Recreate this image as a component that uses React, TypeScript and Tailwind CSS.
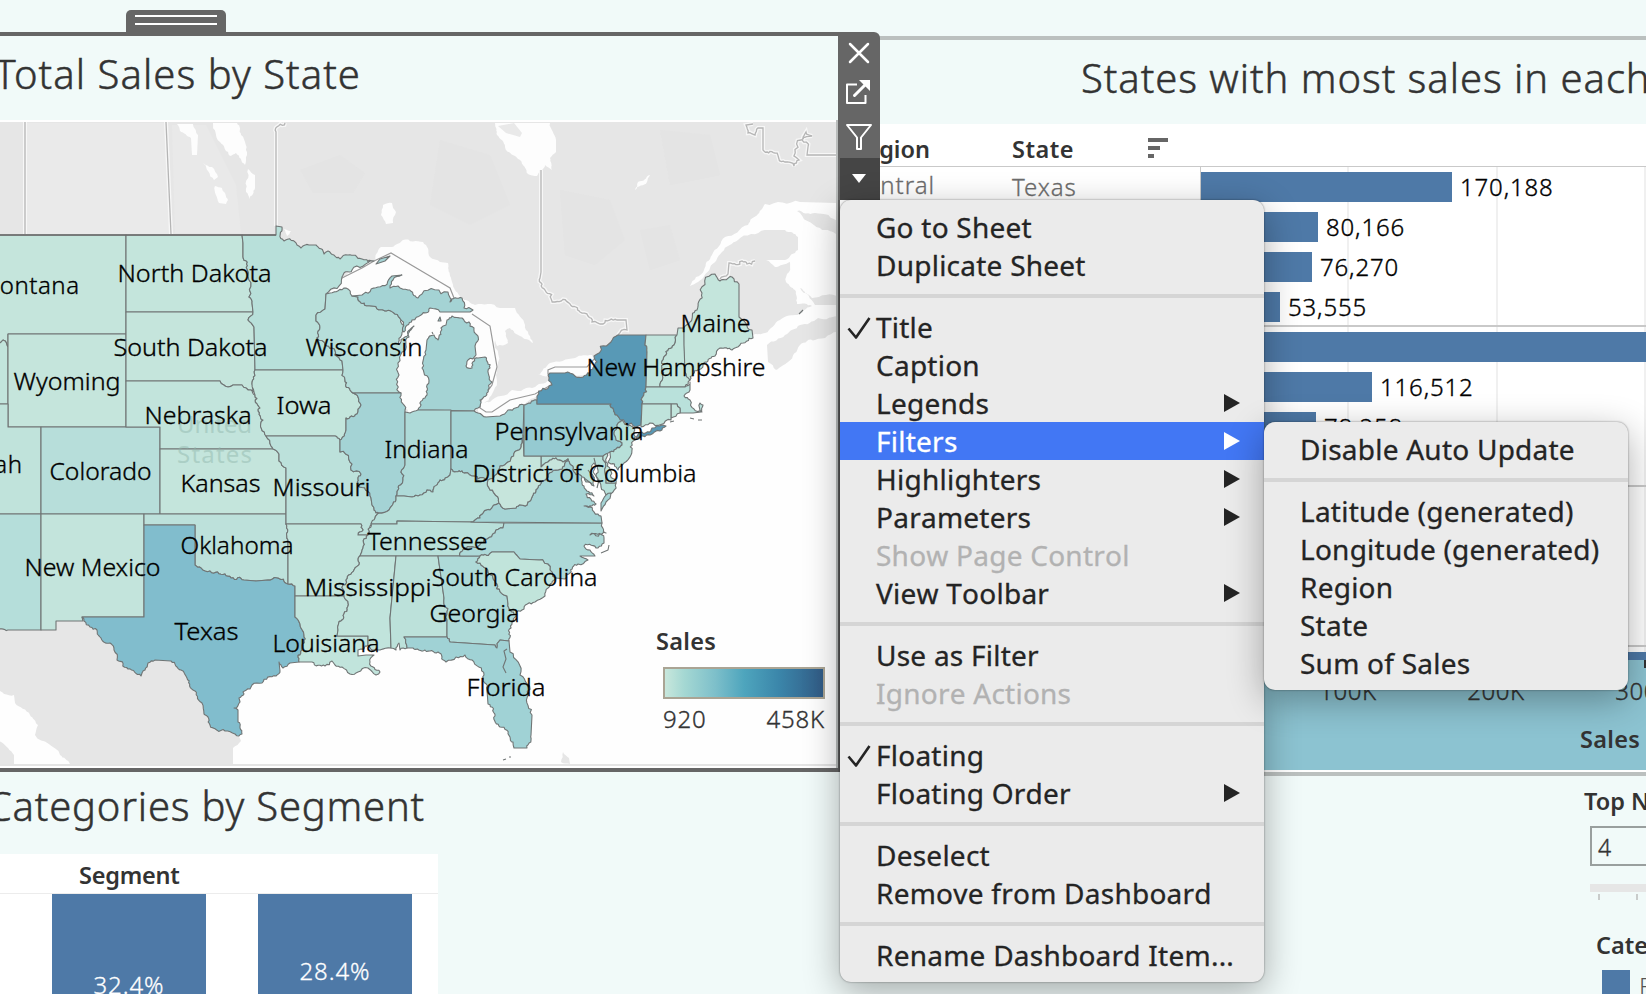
import React from "react";
import clsx from "clsx";

type Pt = [number, number];

const parse = (s: string): Pt[] =>
  s.trim().split(/\s+/).map((p) => p.split(",").map(Number) as Pt);

const hash = (a: number, b: number) => {
  const v = Math.sin(a * 12.9898 + b * 78.233) * 43758.5453;
  return v - Math.floor(v) - 0.5;
};

// Splits a border segment into a slightly ragged line; the result does not
// depend on the direction, so neighbouring states share the same edge.
const ragged = (a: Pt, b: Pt, depth: number, amp: number): Pt[] => {
  const dx = b[0] - a[0];
  const dy = b[1] - a[1];
  const len = Math.hypot(dx, dy);
  if (depth === 0 || len < 3) return [b];
  const flip = a[0] > b[0] || (a[0] === b[0] && a[1] > b[1]);
  const o = hash(a[0] + b[0], a[1] + b[1]) * len * amp * (flip ? -1 : 1);
  const m: Pt = [(a[0] + b[0]) / 2 - (dy / len) * o, (a[1] + b[1]) / 2 + (dx / len) * o];
  return [...ragged(a, m, depth - 1, amp * 1.25), ...ragged(m, b, depth - 1, amp * 1.25)];
};

const outline = (s: string, amp = 0.4, close = true) => {
  const pts = parse(s);
  const out: Pt[] = [pts[0]];
  const n = close ? pts.length : pts.length - 1;
  for (let i = 0; i < n; i++) {
    const a = pts[i];
    const b = pts[(i + 1) % pts.length];
    const dx = Math.abs(b[0] - a[0]);
    const dy = Math.abs(b[1] - a[1]);
    const straight = dx <= 1 || dy <= 1 || (dx > 35 && dy <= 5) || (dy > 35 && dx <= 7);
    if (straight) out.push(b);
    else out.push(...ragged(a, b, 3, amp));
  }
  return "M" + out.map((p) => p[0].toFixed(1) + "," + p[1].toFixed(1)).join("L") + (close ? "Z" : "");
};

const STATES: [string, string][] = [
  ["#c5e5dc", "-20,235 126,235 126,334 8,334 8,347 3,340 -2,344 -20,344"],
  ["#c2e4dc", "-20,344 -2,344 3,340 8,347 8,404 -20,404"],
  ["#c5e5dc", "8,334 126,334 126,427 8,427"],
  ["#c0e3db", "-4,404 8,404 8,427 41,427 41,514 -4,514"],
  ["#b7deda", "41,427 160,427 160,514 41,514"],
  ["#b5deda", "-4,514 41,514 41,630 8,630 -4,625"],
  ["#c3e4dc", "41,514 144,514 144,617 82,617 83,621 56,621 56,630 41,630"],
  ["#c4e5dc", "126,235 242,235 243,243 243,257 247,269 249,297 252,303 253,312 126,312"],
  ["#c5e5dc", "126,312 253,312 248,320 254,327 255,370 252,384 254,392 251,390 242,385 233,385 228,387 220,381 126,381"],
  ["#c2e4dc", "126,381 220,381 228,387 233,385 242,385 251,390 255,395 260,408 263,420 266,436 271,446 273,449 160,449 160,427 126,427"],
  ["#c4e5dc", "160,449 273,449 279,454 279,461 286,468 286,514 160,514"],
  ["#bde1db", "144,514 286,514 286,524 288,540 288,584 277,578 268,580 256,581 244,580 231,578 225,574 210,571 201,568 195,565 195,525 144,525"],
  ["#81bdcd", "144,525 195,525 195,565 201,568 210,571 225,574 231,578 244,580 256,581 268,580 277,578 288,584 295,586 295,617 300,624 304,635 302,650 299,662 290,663 283,668 279,662 280,671 276,676 262,683 252,685 250,689 243,692 244,694 239,698 240,702 234,708 238,710 238,722 240,728 242,734 239,736 235,734 225,731 210,725 204,714 202,703 193,690 187,678 181,670 171,661 155,660 148,663 145,670 141,676 128,669 117,660 114,650 110,643 100,637 90,627 84,621 82,617 144,617"],
  ["#b8e0da", "242,235 276,235 276,226 282,227 284,241 297,245 301,248 309,245 316,245 324,254 328,251 340,259 348,255 362,259 374,261 352,270 342,277 326,294 325,309 316,315 316,321 319,324 317,338 325,345 335,355 342,361 343,370 255,370 254,327 248,320 253,312 252,303 249,297 247,269 243,257 243,243"],
  ["#c3e5dc", "255,370 343,370 345,380 350,390 353,393 358,397 361,405 357,414 346,418 346,430 340,440 335,436 266,436 263,420 260,408 255,395 252,384"],
  ["#bce1db", "266,436 335,436 340,440 340,452 351,470 361,474 358,485 371,498 372,505 379,513 375,518 370,526 368,535 358,535 363,530 361,524 286,524 286,468 279,461 279,454 273,449 271,446"],
  ["#c1e4dc", "286,524 361,524 363,530 358,535 368,535 363,548 360,556 355,568 346,580 344,596 295,596 295,586 288,584 288,540"],
  ["#c1e4dc", "295,596 344,596 347,608 342,620 338,630 337,636 368,636 368,645 358,650 358,656 366,655 374,655 370,662 380,672 376,675 368,668 358,672 350,674 342,667 335,665 332,661 325,666 312,662 299,662 302,650 304,635 300,624 295,617"],
  ["#b6deda", "326,294 330,293 346,288 352,296 358,297 361,303 372,306 386,311 395,314 401,320 403,331 399,344 408,335 414,326 409,337 402,352 399,375 401,393 353,393 350,390 345,380 343,370 342,361 335,355 325,345 317,338 319,324 316,321 316,315 325,309"],
  ["#a4d3d5", "353,393 401,393 405,410 405,465 403,480 398,490 396,496 396,500 389,510 379,513 372,505 371,498 358,485 361,474 351,470 340,452 340,440 346,430 346,418 357,414 361,405 358,397"],
  ["#a4d3d4", "352,296 362,295 378,287 392,276 402,275 393,280 390,288 398,286 408,290 418,298 422,294 448,292 450,302 462,298 464,308 473,310 470,312 452,312 440,312 430,308 421,315 412,320 404,332 401,320 395,314 386,311 372,306 361,303 358,297"],
  ["#a4d3d4", "447,320 452,316 462,318 474,328 477,335 475,346 476,355 468,360 466,366 472,368 478,358 485,357 490,368 492,382 488,390 480,400 478,408 474,411 418,410 425,398 427,385 422,368 426,350 427,340 434,335 438,340 441,328 446,325"],
  ["#aedad8", "405,412 410,413 418,410 451,410 451,469 450,475 440,480 433,492 427,490 420,495 412,497 404,496 396,496 398,490 403,480 405,465"],
  ["#a4d4d5", "451,411 474,411 478,413 486,417 500,416 508,410 524,405 523,435 519,450 508,462 500,466 497,474 488,480 484,478 472,476 462,471 451,469"],
  ["#b6dfd9", "379,513 389,510 396,500 396,496 404,496 412,497 420,495 427,490 433,492 440,480 450,475 451,469 462,471 472,476 484,478 488,480 490,490 499,503 490,510 480,518 471,522 397,521 397,524 371,524 375,518"],
  ["#b9e0da", "371,524 397,524 397,521 471,522 504,523 503,528 495,533 484,540 470,547 460,556 360,556 363,548 368,535"],
  ["#c1e4dc", "360,556 396,556 390,618 391,648 380,650 372,650 368,645 368,636 337,636 338,630 342,620 347,608 344,596 346,580 355,568"],
  ["#bce1da", "396,556 438,556 444,598 447,620 447,637 404,637 407,648 400,650 399,643 396,650 391,648 390,618"],
  ["#aedad8", "438,556 460,556 480,556 476,562 488,572 497,584 507,596 508,604 516,614 511,628 509,641 500,640 497,648 495,645 450,642 447,637 447,620 444,598"],
  ["#a0d2d5", "404,637 447,637 450,642 495,645 497,648 500,640 509,641 510,652 520,675 528,695 532,715 531,735 527,748 514,748 510,737 500,727 495,716 488,704 487,690 484,675 472,660 465,655 456,657 446,662 438,652 425,650 413,648 407,648"],
  ["#add9d8", "504,523 602,523 606,533 590,535 604,538 604,543 598,548 584,546 590,550 595,556 580,556 588,560 578,564 570,573 565,579 556,578 539,560 520,559 514,552 492,552 480,556 460,556 470,547 484,540 495,533 503,528"],
  ["#c1e4db", "480,556 492,552 514,552 520,559 539,560 556,578 548,588 545,596 535,602 522,610 516,614 508,604 507,596 497,584 488,572 476,562"],
  ["#b7e0da", "541,456 603,456 606,483 616,483 613,492 606,495 601,487 597,478 594,463 591,470 594,486 586,482 580,475 571,465 568,459 563,462 556,458 550,460 541,467"],
  ["#a5d4d5", "568,459 571,465 580,475 584,486 594,496 586,494 596,504 584,506 598,514 601,516 602,523 471,522 480,518 490,510 499,503 505,509 516,508 527,505 533,495 540,485 545,480 558,470"],
  ["#c6e5dc", "524,456 541,456 541,467 550,460 556,458 563,462 568,459 558,470 545,480 540,485 533,495 527,505 516,508 505,509 499,503 490,490 488,480 497,474 500,466 508,462 519,450 523,435"],
  ["#c1e4dc", "603,456 607,453 610,470 616,483 606,483"],
  ["#a5d4d5", "606,495 611,493 606,502 601,511 601,503"],
  ["#95cad1", "524,405 537,400 537,404 611,404 617,415 622,420 617,425 614,433 622,445 610,452 603,456 524,456"],
  ["#b7e0d9", "622,420 633,427 635,440 631,455 624,463 618,470 608,462 610,452 622,445 614,433 617,425"],
  ["#5899b6", "537,404 537,396 552,385 548,375 550,373 565,373 575,376 590,373 597,362 594,356 611,342 618,335 646,335 645,345 647,352 646,387 642,404 641,425 636,427 617,415 611,404"],
  ["#5899b6", "642,432 652,428 662,425 666,426 660,431 650,435 636,438"],
  ["#c1e4dc", "646,335 677,335 674,345 666,355 662,368 660,387 646,387 647,352 645,345"],
  ["#c2e5dc", "677,335 678,328 684,328 685,372 690,380 685,387 660,387 662,368 666,355 674,345"],
  ["#c4e5dc", "684,328 690,322 697,310 702,293 715,274 720,281 732,277 739,284 739,317 752,330 753,338 740,345 732,350 720,348 715,356 705,362 698,370 690,380 685,372 684,345"],
  ["#b9e1db", "646,387 685,387 690,382 690,390 684,396 690,400 694,409 702,412 700,403 703,405 701,412 693,413 680,413 677,404 642,404"],
  ["#c2e5dc", "671,404 677,404 680,413 671,418"],
  ["#bfe3db", "642,404 671,404 671,420 650,423 641,427"],
];

const LABELS: [string, number, number, number][] = [
  ["North Dakota", 119, 270, 282],
  ["South Dakota", 115, 266, 356],
  ["Wisconsin", 307, 421, 356],
  ["Wyoming", 15, 119, 390],
  ["Nebraska", 146, 250, 424],
  ["Iowa", 278, 330, 414],
  ["Colorado", 51, 150, 480],
  ["Kansas", 182, 259, 492],
  ["Missouri", 274, 369, 496],
  ["Indiana", 386, 467, 458],
  ["Oklahoma", 182, 292, 554],
  ["New Mexico", 26, 159, 576],
  ["Texas", 176, 237, 640],
  ["Louisiana", 274, 378, 652],
  ["Mississippi", 306, 430, 596],
  ["Tennessee", 369, 486, 550],
  ["South Carolina", 433, 596, 586],
  ["Georgia", 431, 518, 622],
  ["Florida", 468, 544, 696],
  ["Pennsylvania", 496, 642, 440],
  ["District of Columbia", 474, 695, 482],
  ["New Hampshire", 588, 764, 376],
  ["Maine", 682, 749, 332],
];

const LAND = [
  "-5,122 840,122 840,203 800,202 765,204 758,214 748,225 725,237 712,255 704,270 690,286 698,282 710,268 722,252 738,240 765,230 785,230 798,237 798,250 785,260 766,260 775,267 790,262 786,282 795,290 797,304 812,306 795,315 780,320 765,333 753,335 700,368 640,415 560,450 300,450 100,600 -5,630",
  "-5,627 56,628 56,615 84,615 150,640 205,665 225,715 238,730 241,741 233,748 233,764 70,764 60,755 35,735 38,725 30,715 15,703 14,695 -5,690",
  "-5,735 8,748 14,755 14,764 -5,764",
  "767,345 785,335 800,325 818,318 840,316 840,330 815,340 800,345 788,362 776,370 768,362",
  "797,211 815,213 840,222 840,236 820,228",
  "800,288 812,298 840,296 840,305 815,305",
  "563,752 569,758 570,764 561,762",
];

const WATER = [
  "326,294 342,277 374,261 381,247 392,247 403,240 423,242 430,257 440,262 448,263 450,276 455,290 464,300 475,305 500,308 515,308 525,325 533,343 520,336 510,328 505,331 508,343 497,346 495,340 497,370 494,390 480,408 440,412 410,414 396,400 396,335 340,300",
  "478,404 490,402 512,390 535,387 552,380 545,392 524,405 500,416 486,417 478,411",
  "538,375 550,363 575,358 592,355 597,362 590,375 550,377",
  "495,123 550,123 556,140 556,152 550,158 552,170 545,165 537,176 528,174 520,160 505,147 497,135",
  "213,123 237,123 241,135 247,155 245,165 236,153 230,156 220,142",
  "177,124 193,124 198,135 197,155 192,155 191,138 180,131",
  "203,163 212,167 218,177 214,180",
  "248,169 255,175 255,188 249,199 246,192",
  "215,186 222,188 228,200 226,204 219,203",
  "383,205 392,203 396,212 393,223 386,224 381,215",
  "635,190 638,182 650,175 647,182",
  "284,229 291,231 287,236",
];

const BOUNDS = [
  "276,226 276,132 285,123",
  "541,170 541,272 540,278 545,290 555,302 570,304 580,312 588,316 592,322 603,324 617,320 626,320 627,330 618,335",
  "753,124 746,125 748,133 755,135 758,128 763,128 763,150 775,153 785,162 794,166 799,160 801,140 806,132 812,136 802,140 808,147 807,155 836,155",
  "720,279 728,274 729,263 742,261 747,264 755,261",
];

const LAKE_LINES = [
  "374,261 391,253 440,282",
  "440,282 450,288 454,298",
  "472,314 490,326 497,367 492,385 480,402 480,408 486,412 492,412 510,400 535,394 551,385",
  "548,374 548,370 555,367 587,367 596,357",
  "325,294 342,278 362,268 374,261",
];

function UsMap() {
  return (
    <svg className="block h-[642px] w-[836px]" viewBox="0 122 836 642">
      <rect x="0" y="122" width="836" height="642" fill="#fefefe" />
      <g fill="#e6e6e6">
        {LAND.map((d) => (
          <path key={d} d={outline(d, 0.22)} />
        ))}
      </g>
      <path d="M26 123h140l5 112H26z" fill="#eaeaea" />
      <path d="M172 125h34l30 60 5 48h-66z" fill="#e9e9e9" />
      <path d="M300 170l40-15 25 18-12 20-40 0zM440 140l50 15 20 50-40 20-40-20zM560 190l50 10 15 40-30 25-30-10zM660 130l50 5 10 40-50 10zM640 230l30-5 10 35-30 10z" fill="#e3e3e3" opacity="0.6" />
      <g fill="#fdfdfd">
        {WATER.map((d) => (
          <path key={d} d={outline(d, 0.22)} />
        ))}
      </g>
      <path d="M498 126l16-3 8 10-2 4-14-4z" fill="#e9e9e9" />
      <g fill="none" stroke="#f7f7f7" strokeWidth="4">
        <path d="M25 122v112M166 122l5 112" />
        {BOUNDS.map((d) => (
          <path key={d} d={outline(d, 0.5, false)} />
        ))}
      </g>
      <g fill="none" stroke="#b5b5b5" strokeWidth="1.3">
        <path d="M25 122v112M166 122l5 112" />
        {BOUNDS.map((d) => (
          <path key={d} d={outline(d, 0.5, false)} />
        ))}
      </g>
      <g fill="none" stroke="#999" strokeWidth="1.2">
        {LAKE_LINES.map((d) => (
          <path key={d} d={"M" + d.replace(/ /g, "L")} />
        ))}
      </g>
      <g stroke="#707575" strokeWidth="1.1" strokeLinejoin="round">
        {STATES.map(([fill, d]) => (
          <path key={d} d={outline(d)} fill={fill} />
        ))}
        <path d="M376 264l4-5 10-3-5 5z" fill="#a4d3d4" />
        <path d="M438 321l2-4 1 4zM432 332l1 2" fill="#a4d3d4" />
        <path d="M0 235H276" fill="none" stroke="#6a6a6a" strokeWidth="1.5" />
        <path d="M507 649l-3 2 2 8-3 8 3 6M609 545l-1 5-7 3M503 760l3-1m3-2 2 0M670 422l4-1M690 418l4 1M698 420l4 0M799 314l4-4" fill="none" />
        <path d="M594 458l2 8-3 6 6 8-2 8M588 470l6 8M584 478l8 6" fill="none" />
      </g>
      <g fontFamily="Noto Sans, sans-serif" fontSize="24">
        <g fill="#8fb5ab" opacity="0.45" fontWeight="400">
          <text x="177" y="433" textLength="75">United</text>
          <text x="177" y="463" textLength="75">States</text>
        </g>
        <g fill="#000" stroke="#000" strokeWidth="0.35" fontWeight="300">
          <text x="79.500" y="294" textAnchor="end" letterSpacing="0.500">Montana</text>
          <text x="22.500" y="473" textAnchor="end" letterSpacing="0.500">Utah</text>
          {LABELS.map(([t, a, b, y]) => (
            <text key={t} x={a - 1.5} y={y} textLength={b - a + 3} lengthAdjust="spacingAndGlyphs">
              {t}
            </text>
          ))}
        </g>
      </g>
    </svg>
  );
}

function MapPanel() {
  return (
    <section className="flex h-[740px] w-[838px] flex-col border-y-4 border-[#666666]">
      <h2 className="flex h-[84px] w-[361px] shrink-0 justify-end whitespace-nowrap text-[40px] leading-[75px] font-light tracking-[1.05px] text-[#333] [-webkit-text-stroke:0.5px_currentColor]">
        Total Sales by State
      </h2>
      <div className="relative h-[648px] border-r-2 border-[#b9bcbb] bg-white pt-0.5">
        <UsMap />
        <div className="h-0.5 bg-[#e4e4e4]" />
        <div className="absolute top-[508px] left-[655px] flex w-[172px] flex-col text-[#333]">
          <span className="pl-px text-[23.5px] leading-[26px] font-semibold tracking-[0.3px]">Sales</span>
          <span className="mt-[13px] ml-2 h-8 w-[162px] border-2 border-[#aaa494] bg-[linear-gradient(90deg,#c8e7dc_0%,#a5d8d3_12%,#7dbfca_32%,#4ea5bd_50%,#3b86aa_72%,#325c86_100%)]" />
          <span className="mt-[5px] ml-2 flex justify-between pr-[2px] text-[24px] leading-[30px] font-light tracking-[0.8px] [-webkit-text-stroke:0.35px_currentColor]">
            <span>920</span>
            <span>458K</span>
          </span>
        </div>
      </div>
    </section>
  );
}

function SegmentPanel() {
  return (
    <section className="flex h-[222px] w-[838px] flex-col">
      <h2 className="flex h-[82px] w-[425px] shrink-0 justify-end whitespace-nowrap text-[40px] leading-[67px] font-light tracking-[0.8px] text-[#333] [-webkit-text-stroke:0.5px_currentColor]">
        Categories by Segment
      </h2>
      <div className="flex h-[140px] w-[438px] flex-col bg-white">
        <div className="h-10 pl-[79px] text-[23.5px] leading-[42px] font-semibold tracking-[-0.25px] text-[#333] shadow-[inset_0_-1px_#ececec]">
          Segment
        </div>
        <div className="flex h-[100px] gap-[52px] pl-[52px] text-[24px] leading-[30px] font-light tracking-[0.9px] text-white [-webkit-text-stroke:0.3px_currentColor]">
          <div className="w-[154px] bg-[#4e79a7] pt-[76px] text-center">32.4%</div>
          <div className="w-[154px] bg-[#4e79a7] pt-[62px] text-center">28.4%</div>
        </div>
      </div>
    </section>
  );
}

const GROUPS: [number, string][][] = [
  [[252, "170,188"], [118, "80,166"], [112, "76,270"], [80, "53,555"]],
  [[460, ""], [172, "116,512"], [116, "78,258"], [60, ""]],
  [[60, ""], [60, ""], [60, ""], [60, ""]],
];

function BarChart() {
  return (
    <div className="relative flex h-[493px] w-[446px] flex-col border-l border-[#c9c9c9]">
      <div className="absolute inset-0 flex justify-between pr-0 pl-[146px]">
        <span className="w-0.5 bg-[#f0f0f0]" />
        <span className="w-0.5 bg-[#f0f0f0]" />
        <span className="w-0.5 bg-[#f0f0f0]" />
      </div>
      {GROUPS.map((g, i) => (
        <div key={i} className="relative flex h-[160px] flex-col gap-[10px] border-b-2 border-[#c9c9c9] pt-[5px]">
          {g.map(([w, t], j) => (
            <div key={j} className="flex h-[30px] shrink-0 items-center gap-[8px]">
              <span className="h-[30px] shrink-0 bg-[#4e79a7]" style={{ width: w - 1 }} />
              <span className="text-[24px] leading-[30px] font-light tracking-[0.85px] text-black [-webkit-text-stroke:0.35px_currentColor]">
                {t}
              </span>
            </div>
          ))}
        </div>
      ))}
      <div className="relative mt-[5px] h-2 w-full bg-[#4e79a7]" />
    </div>
  );
}

function StatesPanel() {
  return (
    <section className="mt-[4px] flex h-[740px] w-full flex-col border-y-4 border-[#bbc0bf]">
      <h2 className="h-[84px] shrink-0 pl-[241px] whitespace-nowrap text-[40px] leading-[75px] font-light tracking-[0.95px] text-[#333] [-webkit-text-stroke:0.5px_currentColor]">
        States with most sales in each
      </h2>
      <div className="flex h-[42px] shrink-0 bg-white text-[23.5px] leading-[50px] font-semibold text-[#333]">
        <span className="flex w-[90px] justify-end">Region</span>
        <span className="ml-[82px] w-[136px] tracking-[0.5px]">State</span>
        <svg className="mt-[14px] h-5 w-5" viewBox="0 0 20 20" fill="#666">
          <path d="M0 0h20v4H0zM0 8h12v4H0zM0 16h6v4H0z" />
        </svg>
      </div>
      <div className="flex h-[493px] shrink-0 border-t border-[#c9c9c9] bg-white text-[24px] font-light tracking-[0.95px] text-[#6c6c6c] [-webkit-text-stroke:0.3px_currentColor]">
        <span className="flex w-[95px] justify-end leading-[36px]">Central</span>
        <span className="ml-[77px] w-[188px] leading-[40px]">Texas</span>
        <BarChart />
      </div>
      <div className="flex h-[111px] shrink-0 flex-col border-t border-[#cfdfe3] bg-[#8cc3d1] text-[#333]">
        <div className="flex h-2 justify-end pr-0">
          <span className="w-0.5 bg-[#333]" />
        </div>
        <div className="flex pl-[434px] text-[24px] leading-[46px] font-light tracking-[0.6px] [-webkit-text-stroke:0.35px_currentColor]">
          <span className="w-[148px] shrink-0 text-center">100K</span>
          <span className="w-[148px] shrink-0 text-center">200K</span>
          <span className="w-[148px] shrink-0 text-center">300K</span>
        </div>
        <div className="pt-[10px] pl-[740px] text-[23.5px] leading-[30px] font-semibold tracking-[0.3px]">Sales</div>
      </div>
      <div className="h-0.5 shrink-0 bg-white" />
    </section>
  );
}

function FilterPanel() {
  return (
    <aside className="flex h-[218px] flex-col overflow-hidden pt-[10px] pl-[744px] text-[#333]">
      <span className="whitespace-nowrap text-[23.5px] leading-[30px] font-semibold">Top N</span>
      <span className="mt-[10px] ml-[6px] h-10 w-[100px] shrink-0 border-2 border-[#999f9e] pl-[6px] text-[23px] leading-[38px] font-light [-webkit-text-stroke:0.35px_currentColor]">4</span>
      <span className="mt-[18px] ml-[6px] h-2 w-[100px] shrink-0 bg-[#e6e6e6]" />
      <span className="mt-0.5 ml-[14px] flex gap-9">
        <span className="h-[6px] w-0.5 bg-[#c9cccb]" />
        <span className="h-[6px] w-0.5 bg-[#c9cccb]" />
      </span>
      <span className="mt-[30px] ml-[12px] whitespace-nowrap text-[23.5px] leading-[30px] font-semibold">Category</span>
      <span className="mt-[10px] ml-[18px] flex gap-[9px]">
        <span className="h-7 w-7 shrink-0 bg-[#4e79a7]" />
        <span className="text-[24px] leading-[32px] font-light text-[#555]">Furniture</span>
      </span>
    </aside>
  );
}

function Toolbar() {
  return (
    <div className="absolute top-8 left-[838px] flex h-[740px] w-[42px] flex-col">
      <div className="flex h-[168px] w-[42px] flex-col rounded-tr-[6px] bg-[#666]">
        <svg className="h-[126px] w-[42px]" viewBox="0 0 42 126" fill="none" stroke="#fff">
          <path d="M12 12l18 18M30 12L12 30" strokeWidth="2.5" strokeLinecap="round" />
          <path d="M19 52.500H9v18.500h18.500V63" strokeWidth="2" strokeLinejoin="round" />
          <path d="M16.500 63.500L28 52" strokeWidth="3" strokeLinecap="round" />
          <path d="M21 48h11v11z" fill="#fff" stroke="none" />
          <path d="M9 93h24L23 105.500V117h-4v-11.500z" strokeWidth="2" strokeLinejoin="round" />
        </svg>
        <div className="ml-0.5 flex h-[42px] w-10 justify-center bg-[#454545] pr-[2px] pt-4">
          <svg className="h-[9px] w-[14px]" viewBox="0 0 14 9" fill="#fff">
            <path d="M0 0h14L7 9z" />
          </svg>
        </div>
      </div>
      <div className="w-0.5 grow bg-[#5c5c5c]" />
    </div>
  );
}

type Item = { label: string; check?: boolean; sub?: boolean; off?: boolean; active?: boolean };

const MENU: Item[][] = [
  [{ label: "Go to Sheet" }, { label: "Duplicate Sheet" }],
  [
    { label: "Title", check: true },
    { label: "Caption" },
    { label: "Legends", sub: true },
    { label: "Filters", sub: true, active: true },
    { label: "Highlighters", sub: true },
    { label: "Parameters", sub: true },
    { label: "Show Page Control", off: true },
    { label: "View Toolbar", sub: true },
  ],
  [{ label: "Use as Filter" }, { label: "Ignore Actions", off: true }],
  [{ label: "Floating", check: true }, { label: "Floating Order", sub: true }],
  [{ label: "Deselect" }, { label: "Remove from Dashboard" }],
  [{ label: "Rename Dashboard Item..." }],
];

const SUBMENU: Item[][] = [
  [{ label: "Disable Auto Update" }],
  [
    { label: "Latitude (generated)" },
    { label: "Longitude (generated)" },
    { label: "Region" },
    { label: "State" },
    { label: "Sum of Sales" },
  ],
];

function Menu({ groups, className }: { groups: Item[][]; className: string }) {
  return (
    <div
      className={clsx(
        "absolute rounded-[11px] bg-[#ebebeb] py-2 shadow-[0_0_2px_rgba(0,0,0,0.5),0_10px_36px_rgba(0,0,0,0.32)]",
        className,
      )}
    >
      {groups.map((g, i) => (
        <div key={i}>
          {i > 0 && <div className="my-[10px] h-1 bg-[#d5d5d5]" />}
          {g.map((it) => (
            <div
              key={it.label}
              className={clsx(
                "flex h-[38px] items-center pr-6 text-[28px] leading-[38px] font-normal tracking-[0.24px] whitespace-nowrap [-webkit-text-stroke:0.3px_currentColor] [font-kerning:none]",
                it.active ? "bg-[#4277f4] text-white" : it.off ? "text-[#b2b2b2]" : "text-[#242424]",
              )}
            >
              <span className="w-[36px] shrink-0 pl-[7px]">
                {it.check && (
                  <svg className="mt-[3px] h-[23px] w-6" viewBox="0 0 24 23" fill="none" stroke="currentColor" strokeWidth="2.6">
                    <path d="M1.500 11.500L9 20.500 22.500 1" strokeLinejoin="round" />
                  </svg>
                )}
              </span>
              <span className="grow">{it.label}</span>
              {it.sub && (
                <svg className="h-[18px] w-4" viewBox="0 0 16 18" fill="currentColor">
                  <path d="M0 0l16 9-16 9z" />
                </svg>
              )}
            </div>
          ))}
        </div>
      ))}
    </div>
  );
}

export default function App() {
  return (
    <div className="relative h-[994px] w-[1646px] overflow-hidden bg-[#f1faf9] [font-family:'Noto_Sans',sans-serif]">
      <div className="flex h-8 items-end pl-[126px]">
        <div className="flex h-[22px] w-[100px] flex-col gap-[6px] rounded-t-[5px] bg-[#666] px-[9px] pt-[5px]">
          <span className="h-0.5 bg-white" />
          <span className="h-0.5 bg-white" />
        </div>
      </div>
      <div className="flex">
        <div className="flex w-[840px] shrink-0 flex-col">
          <MapPanel />
          <SegmentPanel />
        </div>
        <div className="flex w-[806px] flex-col overflow-hidden">
          <StatesPanel />
          <FilterPanel />
        </div>
      </div>
      <Toolbar />
      <Menu groups={MENU} className="top-[200px] left-[840px] w-[424px]" />
      <Menu groups={SUBMENU} className="top-[422px] left-[1264px] w-[364px]" />
    </div>
  );
}
